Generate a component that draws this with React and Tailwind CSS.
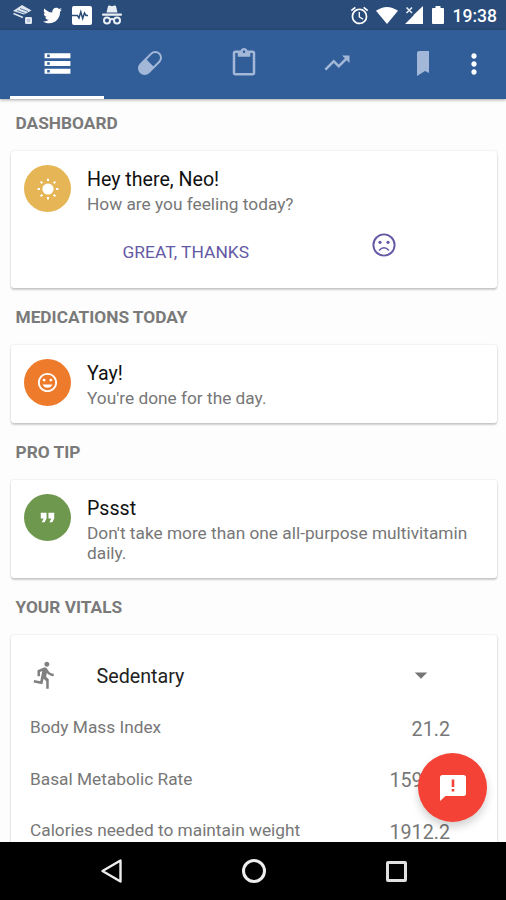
import React, { useState } from "react";
import { FaTwitter } from "react-icons/fa";
import {
	MdAlarm,
	MdArrowDropDown,
	MdContentPaste,
	MdDirectionsRun,
	MdFormatQuote,
	MdMoreVert,
	MdStorage,
	MdTagFaces,
	MdTrendingUp,
} from "react-icons/md";

const VITALS = [
	{ label: "Body Mass Index", value: "21.2" },
	{ label: "Basal Metabolic Rate", value: "1593.5" },
	{ label: "Calories needed to maintain weight", value: "1912.2" },
];

function ScannerIcon() {
	return (
		<svg viewBox="0 0 20 20" className="w-5 h-5">
			<path d="M0 6L9 0l9.500 5.500L11 9.500z" fill="#dfe6f0" />
			<path d="M4 5.500l8 2.800M7 3.500l8 3" stroke="#5d7aa3" strokeWidth="1" />
			<path d="M.5 8.500l9.500 4" stroke="#dfe6f0" strokeWidth="1.600" />
			<rect x="12" y="12" width="7" height="7" rx="1.200" fill="#dfe6f0" />
			<rect x="14" y="14" width="3" height="3" fill="#b9c6da" />
		</svg>
	);
}

function PulseIcon() {
	return (
		<svg viewBox="0 0 20 19" className="w-5 h-[19px]">
			<rect width="20" height="19" rx="2" fill="#fff" />
			<path
				d="M0 9.500h5.500l1.500 2.500 1.800-6 1.900 6.500 1.800-5.500 1.500 2.500H16"
				fill="none"
				stroke="#2a4c7a"
				strokeWidth="1.500"
			/>
		</svg>
	);
}

function IncognitoIcon() {
	return (
		<svg viewBox="0 0 20 20" className="w-5 h-5" fill="#e9eef5">
			<path d="M4.500 7.500L6 1.300Q6.300.2 7.500.5L10 1.200l2.500-.7q1.200-.3 1.500.8l1.500 6.200z" />
			<rect y="8.600" width="20" height="2.200" rx="1" />
			<g fill="none" stroke="#e9eef5" strokeWidth="2">
				<circle cx="5" cy="15.500" r="3" />
				<circle cx="15" cy="15.500" r="3" />
				<path d="M8 14.800q2-1.500 4 0" />
			</g>
		</svg>
	);
}

function WifiIcon() {
	return (
		<svg viewBox="0 0 22 17" className="w-[22px] h-[17px]">
			<path d="M0 3.800Q11-3.800 22 3.800L11 17z" fill="#fff" />
		</svg>
	);
}

function NoSignalIcon() {
	return (
		<svg viewBox="0 0 18 18" className="w-[18px] h-[18px]">
			<path d="M18 0v18H0l8.500-8.500V9z" fill="#fff" />
			<path d="M1.500 1.500l5.500 5.500M7 1.500L1.500 7" stroke="#e3e9f2" strokeWidth="1.700" />
		</svg>
	);
}

function BatteryIcon() {
	return (
		<svg viewBox="0 0 12 18" className="w-3 h-[18px]" fill="#fff">
			<path d="M3.500 0h5v2H11q1 0 1 1v14q0 1-1 1H1q-1 0-1-1V3q0-1 1-1h2.500z" />
		</svg>
	);
}

function PillIcon() {
	return (
		<svg viewBox="0 0 26 26" className="w-[26px] h-[26px]">
			<g transform="rotate(45 13 13)">
				<rect
					x="7.300"
					y="-0.200"
					width="11.400"
					height="26.400"
					rx="5.700"
					fill="none"
					stroke="currentColor"
					strokeWidth="2"
				/>
				<path d="M7 13h12v7a6 6 0 0 1-12 0z" fill="currentColor" />
			</g>
		</svg>
	);
}

function SunIcon() {
	return (
		<svg viewBox="0 0 22 22" className="w-[22px] h-[22px]" fill="#fff">
			<circle cx="11" cy="11" r="5.600" />
			{[0, 45, 90, 135, 180, 225, 270, 315].map((a) => (
				<rect
					key={a}
					x="10"
					y="0.600"
					width="2"
					height="2.400"
					transform={`rotate(${a} 11 11)`}
				/>
			))}
		</svg>
	);
}

function SadIcon() {
	return (
		<svg viewBox="0 0 24 24" className="w-6 h-6" fill="none" stroke="#6459a5">
			<circle cx="12" cy="12" r="10.600" strokeWidth="1.900" />
			<path d="M7 17.500q5-5.400 10 0" strokeWidth="1.500" />
			<circle cx="8" cy="9.300" r="1.600" fill="#6459a5" stroke="none" />
			<circle cx="16" cy="9.300" r="1.600" fill="#6459a5" stroke="none" />
		</svg>
	);
}

function FeedbackIcon() {
	return (
		<svg viewBox="0 0 26 26" className="w-[26px] h-[26px]">
			<path
				d="M2.500 0h21Q26 0 26 2.500v16q0 2.500-2.500 2.500H5.500L0 26V2.500Q0 0 2.500 0z"
				fill="#fff"
			/>
			<path d="M11.700 4.500h2.600v7.500h-2.600zM11.700 14h2.600v2.600h-2.600z" fill="#f44236" />
		</svg>
	);
}

function StatusBar() {
	return (
		<div className="flex h-[30px] shrink-0 items-center bg-[#2a4c7a] pl-[13px] pr-[9px] text-white">
			<div className="flex items-center gap-[10px]">
				<ScannerIcon />
				<FaTwitter className="w-[19px] h-[19px]" />
				<PulseIcon />
				<IncognitoIcon />
			</div>
			<div className="ml-auto flex items-center">
				<MdAlarm className="w-[21px] h-[21px] mr-[6px]" />
				<WifiIcon />
				<span className="ml-[7px]">
					<NoSignalIcon />
				</span>
				<span className="ml-[9px] mr-[9px]">
					<BatteryIcon />
				</span>
				<span className="mt-[2px] text-[17.500px] leading-5 font-medium">
					19:38
				</span>
			</div>
		</div>
	);
}

function Tab({ active, onClick, children }) {
	return (
		<button
			onClick={onClick}
			className={`flex w-[94px] shrink-0 items-center justify-center border-b-[3px] ${active ? "border-white text-white" : "border-transparent text-[#a3b8d8]"}`}
		>
			{children}
		</button>
	);
}

function TabBar() {
	const [tab, setTab] = useState(0);
	return (
		<div className="relative z-10 flex h-[69px] shrink-0 bg-[#315e99] pl-[10px] shadow-[0_1px_3px_rgba(0,0,0,0.35)]">
			<Tab active={tab === 0} onClick={() => setTab(0)}>
				<MdStorage className="w-[31px] h-[31px]" />
			</Tab>
			<Tab active={tab === 1} onClick={() => setTab(1)}>
				<span className="mr-[2px]">
					<PillIcon />
				</span>
			</Tab>
			<Tab active={tab === 2} onClick={() => setTab(2)}>
				<MdContentPaste className="mr-[3px] w-[30px] h-[30px]" />
			</Tab>
			<Tab active={tab === 3} onClick={() => setTab(3)}>
				<MdTrendingUp className="mr-[4px] w-[30px] h-[30px]" />
			</Tab>
			<button className="flex w-[43px] shrink-0 items-center justify-end pb-[3px] text-[#a3b8d8]">
				<svg viewBox="0 0 12 25" className="w-3 h-[25px]" fill="currentColor">
					<path d="M0 2q0-2 2-2h10v22l-4-2-8 5z" />
				</svg>
			</button>
			<button className="ml-[19px] flex w-[52px] shrink-0 items-center justify-center pb-px text-white">
				<MdMoreVert className="w-[32px] h-[32px]" />
			</button>
		</div>
	);
}

function SectionTitle({ children }) {
	return (
		<h2 className="pl-[15.500px] text-[17.300px] leading-5 font-bold text-[#7a7a7a]">
			{children}
		</h2>
	);
}

function Card({ className, children }) {
	return (
		<div
			className={`ml-[10.500px] mr-[9.500px] rounded-[3px] bg-white shadow-[0_0_2px_rgba(0,0,0,0.16),0_2px_2px_rgba(0,0,0,0.18)] ${className}`}
		>
			{children}
		</div>
	);
}

function Message({ icon, color, title, text }) {
	return (
		<div className="flex pl-[13.500px] pt-[14px]">
			<div
				className={`flex w-[47px] h-[47px] mr-px shrink-0 items-center justify-center rounded-full text-white ${color}`}
			>
				{icon}
			</div>
			<div className="ml-[15px]">
				<h3 className="mt-[3px] text-[19.600px] leading-6 text-[#111]">
					{title}
				</h3>
				<p className="mt-[2px] w-[395px] text-[17.300px] leading-5 text-[#777]">
					{text}
				</p>
			</div>
		</div>
	);
}

export default function App() {
	return (
		<div className="relative flex h-[900px] w-[506px] flex-col overflow-hidden bg-[#fdfdfd] font-['Roboto',sans-serif]">
			<StatusBar />
			<TabBar />

			<main className="h-[743px] shrink-0 overflow-hidden pt-[14px]">
				<SectionTitle>DASHBOARD</SectionTitle>
				<Card className="mt-[18px] h-[137px]">
					<Message
						icon={<SunIcon />}
						color="bg-[#e5b556]"
						title="Hey there, Neo!"
						text="How are you feeling today?"
					/>
					<div className="flex items-center pl-[112px] pt-[13px]">
						<button className="mt-[15px] text-[17.400px] leading-5 text-[#6459a5]">
							GREAT, THANKS
						</button>
						<button className="ml-[123px]">
							<SadIcon />
						</button>
					</div>
				</Card>

				<div className="pt-[19px]">
					<SectionTitle>MEDICATIONS TODAY</SectionTitle>
				</div>
				<Card className="mt-[18px] h-[78px]">
					<Message
						icon={<MdTagFaces className="w-[23px] h-[23px]" />}
						color="bg-[#ee7b2c]"
						title="Yay!"
						text="You're done for the day."
					/>
				</Card>

				<div className="pt-[19px]">
					<SectionTitle>PRO TIP</SectionTitle>
				</div>
				<Card className="mt-[18px] h-[98px]">
					<Message
						icon={<MdFormatQuote className="w-[23px] h-[23px]" />}
						color="bg-[#6f984f]"
						title="Pssst"
						text="Don't take more than one all-purpose multivitamin daily."
					/>
				</Card>

				<div className="pt-[19px]">
					<SectionTitle>YOUR VITALS</SectionTitle>
				</div>
				<Card className="mt-[18px] h-[260px] pl-[19.500px] pr-[46.500px]">
					<div className="flex items-center pt-[25px]">
						<MdDirectionsRun className="w-[30px] h-[30px] text-[#808080]" />
						<span className="ml-[36.500px] pt-[3px] text-[19.700px] leading-6 text-[#222]">
							Sedentary
						</span>
						<MdArrowDropDown className="ml-auto mr-[14px] w-[30px] h-[30px] text-[#757575]" />
					</div>
					<div className="pt-[12px]">
						{VITALS.map((v) => (
							<div
								key={v.label}
								className="flex h-[51.500px] items-center justify-between text-[#777]"
							>
								<span className="pt-px text-[17.300px]">{v.label}</span>
								<span className="pt-[4px] text-[19.700px]">{v.value}</span>
							</div>
						))}
					</div>
				</Card>
			</main>

			<nav className="flex h-[58px] shrink-0 items-center bg-black pl-[100px]">
				<svg viewBox="0 0 24 24" className="w-6 h-6">
					<path
						d="M20.500 1.500v21L2.500 12z"
						fill="none"
						stroke="#eee"
						strokeWidth="2.400"
						strokeLinejoin="round"
					/>
				</svg>
				<div className="ml-[118px] w-6 h-6 rounded-full border-[3px] border-[#eee]" />
				<div className="ml-[120px] w-[21px] h-[21px] rounded-[2px] border-[3px] border-[#e0e0e0]" />
			</nav>

			<button className="absolute left-[418px] top-[753px] flex w-[69px] h-[69px] items-center justify-center rounded-full bg-[#f44236] text-white shadow-[0_5px_8px_rgba(0,0,0,0.18)]">
				<FeedbackIcon />
			</button>
		</div>
	);
}
